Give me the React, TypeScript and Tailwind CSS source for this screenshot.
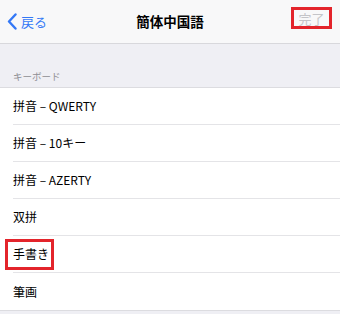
import React from 'react'

const rows = ['拼音 – QWERTY', '拼音 – 10キー', '拼音 – AZERTY', '双拼', '手書き', '筆画']

const font = { fontFamily: '"Noto Sans CJK JP", "Noto Sans", sans-serif' }

export default function App() {
  return (
    <div className="w-[340px] h-[314px] overflow-hidden bg-[#efeff4]" style={font}>
      {/* nav bar */}
      <div className="relative h-[44px] bg-[#f8f8f9] border-b border-[#d8d8dc] flex items-start">
        <div className="flex items-center pl-[7px] gap-[4px] h-[43px] text-[#3478f6]">
          <svg width="10" height="17" viewBox="0 0 10 17" fill="none">
            <path d="M8.5 1.5L2 8.5L8.5 15.5" stroke="#3478f6" strokeWidth="2.4" strokeLinecap="round" strokeLinejoin="round" />
          </svg>
          <span className="text-[13px] leading-none">戻る</span>
        </div>
        <div className="absolute inset-x-0 top-0 h-[43px] flex items-center justify-center pointer-events-none">
          <span className="text-[13.5px] font-semibold text-black leading-none">簡体中国語</span>
        </div>
        <div className="ml-auto mr-[8px] mt-[7px] w-[41px] h-[22px] border-[3px] border-[#e3242b] flex items-center justify-center">
          <span className="text-[13px] leading-none text-[#c4c4c8]">完了</span>
        </div>
      </div>

      {/* section header */}
      <div className="h-[43px] flex items-end px-[13px] pb-[6px]">
        <span className="text-[9.5px] leading-none text-[#8e8e93]">キーボード</span>
      </div>

      {/* list */}
      <div className="bg-white border-t border-[#dcdce0] border-b">
        {rows.map((r, i) => (
          <div key={r} className="relative pl-[13px]">
            <div
              className={
                i < rows.length - 1
                  ? 'h-[37px] flex items-center border-b border-[#e4e4e7]'
                  : 'h-[37px] flex items-center'
              }
            >
              <span className="text-[12px] leading-none text-black">{r}</span>
            </div>
            {r === '手書き' && (
              <div className="absolute left-[5px] top-[3px] w-[49px] h-[31px] border-[3px] border-[#e3242b]" />
            )}
          </div>
        ))}
      </div>
    </div>
  )
}
